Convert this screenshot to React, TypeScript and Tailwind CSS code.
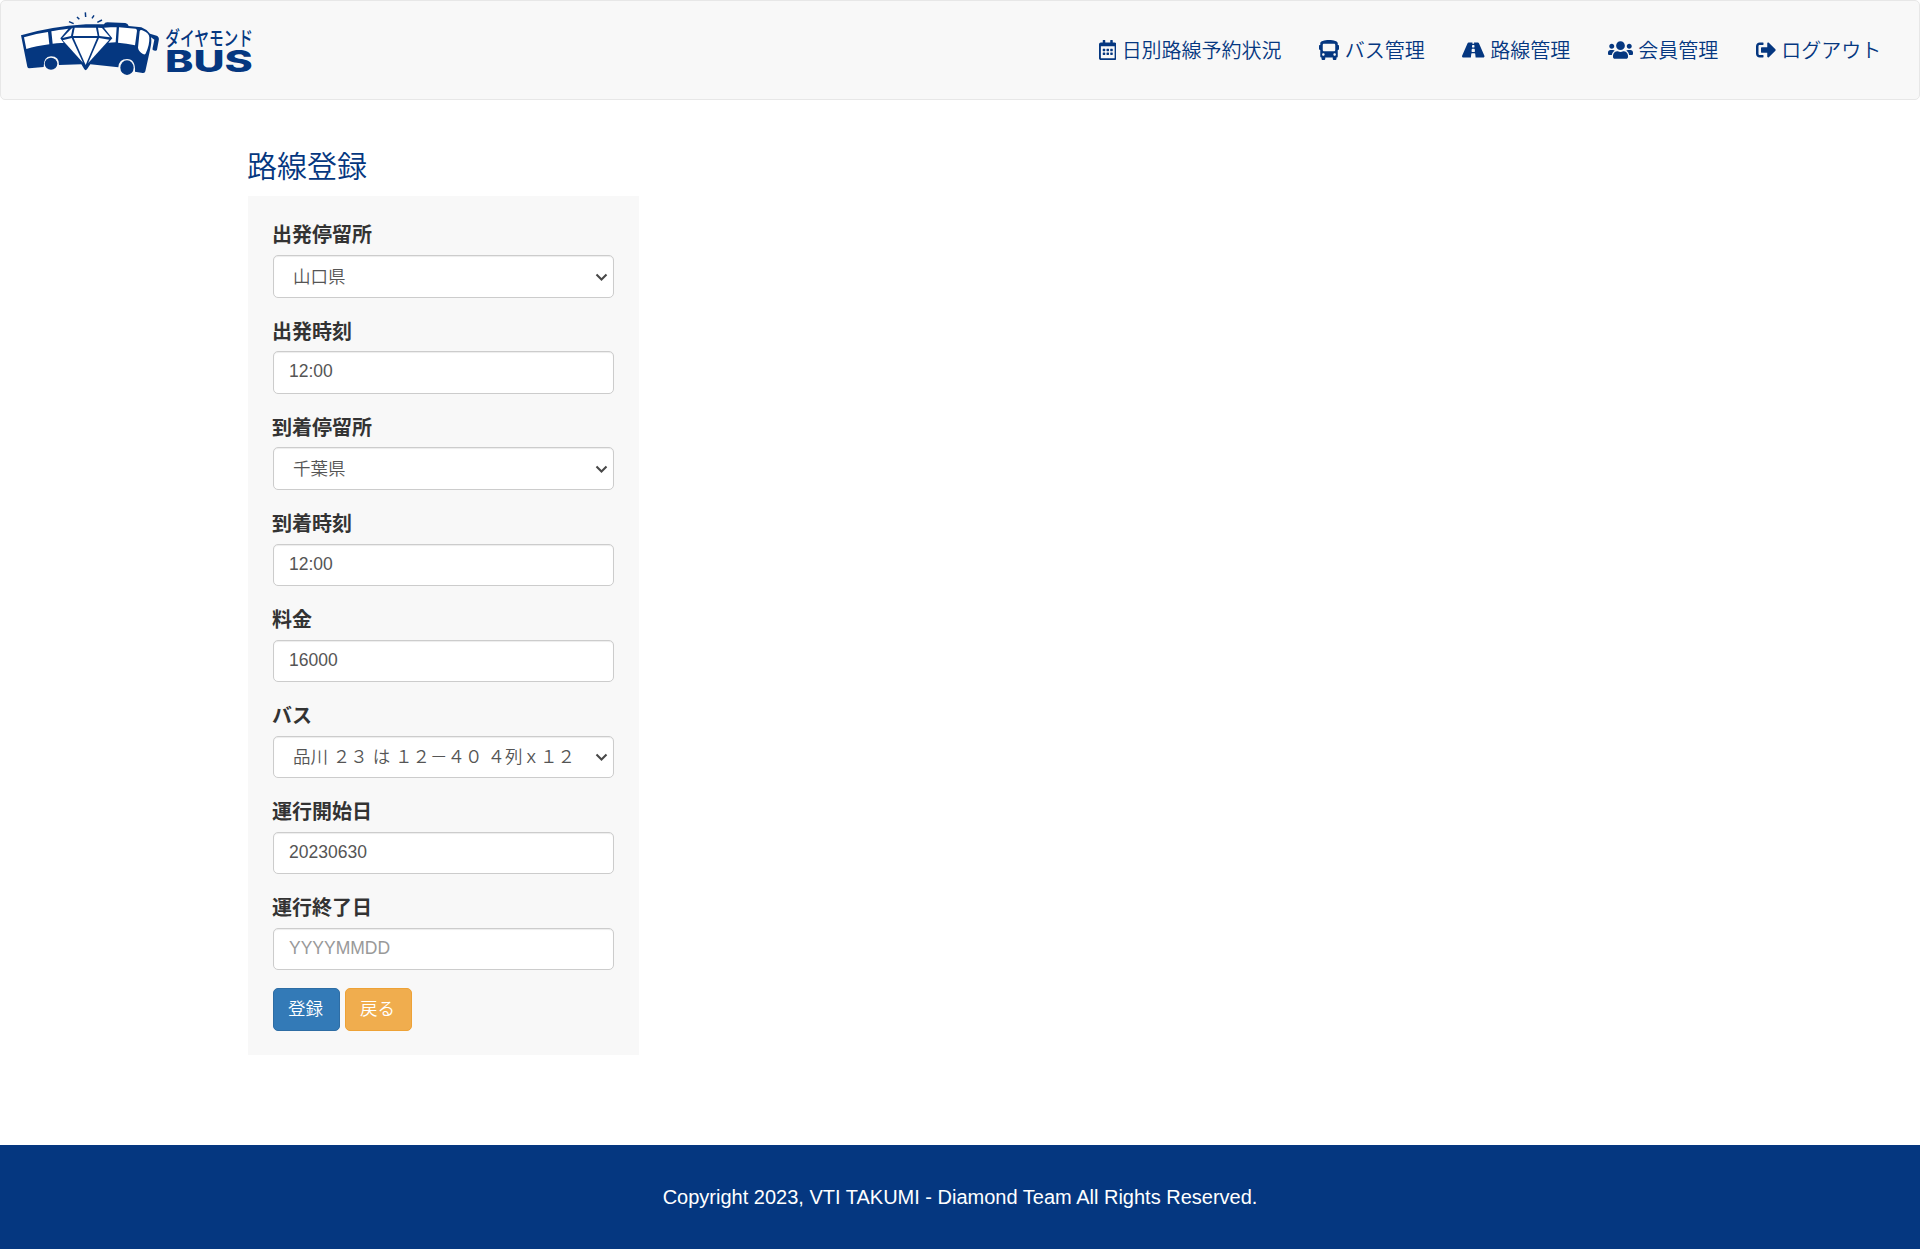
import { FaRegCalendarAlt, FaBus, FaRoad, FaUsers, FaSignOutAlt } from "react-icons/fa";
import type { ReactNode } from "react";

function Logo() {
  return (
    <svg className="block h-[72px] w-[245px] overflow-visible" viewBox="45 24 735 216" role="img" aria-label="ダイヤモンドBUS">
      <path
        fill="#053780"
        d="M63 106Q150 80 258 73L312 73Q314 67 322 67L376 69Q384 70 386 78L424 82Q440 88 450 101L470 107Q479 111 476 122L471 149Q470 153 465 152L460 151Q456 150 458 144L463 119L453 112Q456 125 450 150L436 214Q435 220 428 219L405 215Q407 177 381 177Q357 177 355 202L271 193L261 208Q257 213 253 208L244 193L177 195Q178 169 153 169Q130 170 131 201L88 205Q83 205 82 200Z"
      />
      <g fill="#fff">
        <path d="M72 112Q105 101 144 96L148 133Q108 138 79 147Z" />
        <path d="M154 94Q173 90 205 86L181 115L191 129Q174 128 158 131Z" />
        <path d="M357 82L407 86Q411 87 411 92L405 136Q380 130 354 128Z" />
        <path d="M332 82L350 82L347 127L325 128L337 115L312 83Z" />
        <path d="M419 94Q421 87 430 92Q447 98 448 112Q449 135 438 158Q436 166 429 162Q416 155 414 143Z" />
        <path d="M224 83L288 83L293 108L219 108Z" />
        <path d="M213 87L218 83L213 108L187 114Z" />
        <path d="M294 83L306 84L330 112L298 108Z" />
        <path d="M188 121L215 114L249 188Z" />
        <path d="M221 114L291 114L257 195Z" />
        <path d="M297 114L328 119L264 190Z" />
      </g>
      <ellipse cx="153" cy="191" rx="19" ry="18" fill="#053780" />
      <ellipse cx="381" cy="203" rx="20" ry="22" fill="#053780" />
      <g stroke="#053780" strokeWidth="4.5" fill="none">
        <path d="M207 65L221 71M231 51L238 58M256 37L257 51M282 46L276 55M306 60L292 67" />
      </g>
      <text x="496" y="137" fill="#053780" fontFamily="Noto Sans CJK JP, sans-serif" fontWeight="500" fontSize="60" textLength="263" lengthAdjust="spacingAndGlyphs">ダイヤモンド</text>
      <text x="495" y="217" fill="#053780" fontFamily="Inter, sans-serif" fontWeight="800" fontSize="88" textLength="263" lengthAdjust="spacingAndGlyphs">BUS</text>
    </svg>
  );
}

const navItems: { icon: ReactNode; label: string }[] = [
  { icon: <FaRegCalendarAlt className="h-[20px] w-[17.5px]" />, label: "日別路線予約状況" },
  { icon: <FaBus className="h-[20px] w-[20px]" />, label: "バス管理" },
  { icon: <FaRoad className="h-[20px] w-[22.5px]" />, label: "路線管理" },
  { icon: <FaUsers className="h-[20px] w-[25px]" />, label: "会員管理" },
  { icon: <FaSignOutAlt className="h-[20px] w-[20px]" />, label: "ログアウト" },
];

type Field = { label: string; value?: string; placeholder?: string; select?: boolean };

const fields: Field[] = [
  { label: "出発停留所", value: "山口県", select: true },
  { label: "出発時刻", value: "12:00" },
  { label: "到着停留所", value: "千葉県", select: true },
  { label: "到着時刻", value: "12:00" },
  { label: "料金", value: "16000" },
  { label: "バス", value: "品川 ２３ は １２－４０ ４列ｘ１２", select: true },
  { label: "運行開始日", value: "20230630" },
  { label: "運行終了日", placeholder: "YYYYMMDD" },
];

function FormField({ label, value, placeholder, select }: Field) {
  return (
    <div className="h-[96.14px]">
      <label className="-ml-px block h-[34.15px] pt-[0.4px] text-[20px] leading-[28px] font-bold text-[#333]">{label}</label>
      <div className="relative h-[42.4px]">
        {select ? (
          <>
            <select
              defaultValue={value}
              className="block h-full w-full appearance-none rounded-[5px] border border-[#ccc] bg-white pt-px pr-[36px] pl-[19px] text-[17.5px] font-[350] text-[#555] shadow-[inset_0_1px_1px_rgba(0,0,0,0.075)]"
            >
              <option>{value}</option>
            </select>
            <svg className="pointer-events-none absolute top-[17.5px] right-[6px] h-[9px] w-[13px]" viewBox="0 0 13 9" fill="none">
              <path d="M1.5 1.5L6.5 6.5L11.5 1.5" stroke="#484848" strokeWidth="2.1" />
            </svg>
          </>
        ) : (
          <input
            defaultValue={value}
            placeholder={placeholder}
            className="block h-full w-full rounded-[5px] border border-[#ccc] bg-white px-[15px] pb-[1px] text-[17.5px] text-[#555] shadow-[inset_0_1px_1px_rgba(0,0,0,0.075)] placeholder:text-[#999]"
          />
        )}
      </div>
    </div>
  );
}

export default function App() {
  return (
    <div className="flex h-[1249px] flex-col bg-white font-['Liberation_Sans','Noto_Sans_CJK_JP',sans-serif]" lang="ja">
      <header className="flex h-[100px] shrink-0 justify-between rounded-[5px] border border-[#e7e7e7] bg-[#f8f8f8] pt-[7px] pr-[37.7px] pl-[14px]">
        <Logo />
        <nav className="flex h-[84px] items-center gap-[37.5px]">
          {navItems.map((item) => (
            <a key={item.label} className="flex items-center gap-[5.56px] text-[20px] leading-[28px] font-[350] text-[#053780]">
              {item.icon}
              <span className="pt-[2px]">{item.label}</span>
            </a>
          ))}
        </nav>
      </header>
      <main className="flex-1 pl-[248px]">
        <h3 className="-ml-px flex h-[96px] items-start pt-[49px] text-[30px] leading-[36px] font-[350] text-[#053780]">路線登録</h3>
        <form className="h-[859px] w-[391px] bg-[#f8f8f8] px-[25px] pt-[25px]">
          {fields.map((f) => (
            <FormField key={f.label} {...f} />
          ))}
          <div className="-mt-[2px] flex gap-[5px]">
            <button type="button" className="h-[43px] w-[67px] rounded-[5px] border border-[#2e6da4] bg-[#337ab7] pr-[2px] text-[17.5px] font-[350] text-white">登録</button>
            <button type="button" className="h-[43px] w-[67px] rounded-[5px] border border-[#eea236] bg-[#f0ad4e] pr-[2px] text-[17.5px] font-[350] text-white">戻る</button>
          </div>
        </form>
      </main>
      <footer className="flex h-[104px] shrink-0 items-center justify-center bg-[#053780] text-[20px] text-white">
        Copyright 2023, VTI TAKUMI - Diamond Team All Rights Reserved.
      </footer>
    </div>
  );
}
